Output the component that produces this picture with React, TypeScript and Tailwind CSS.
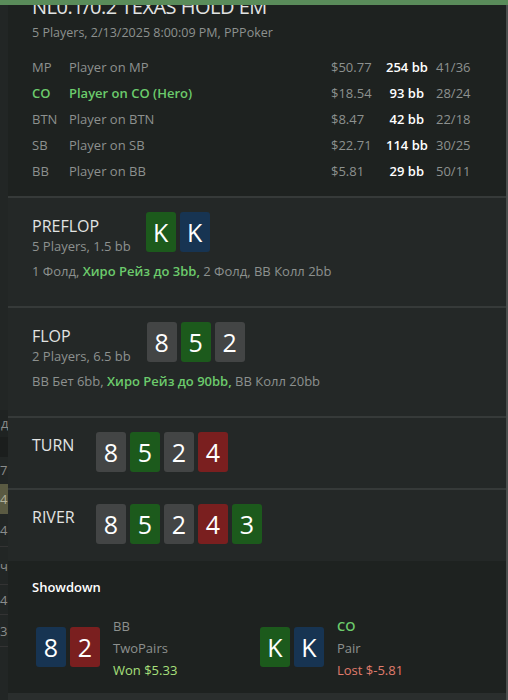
import { X, Minus } from "lucide-react";

type Suit = "g" | "b" | "x" | "r";

const cardBg: Record<Suit, string> = {
  g: "bg-[#1c5a1c]",
  b: "bg-[#173452]",
  x: "bg-[#434545]",
  r: "bg-[#7a1f1f]",
};

function Card({ v, s }: { v: string; s: Suit }) {
  return (
    <div
      className={`${cardBg[s]} w-[30px] h-[40px] rounded-[3px] flex items-center justify-center text-white text-[25px] leading-none`}
    >
      {v}
    </div>
  );
}

const players = [
  { pos: "MP", name: "Player on MP", usd: "$50.77", bb: "254 bb", st: "41/36" },
  { pos: "CO", name: "Player on CO (Hero)", usd: "$18.54", bb: "93 bb", st: "28/24", hero: true },
  { pos: "BTN", name: "Player on BTN", usd: "$8.47", bb: "42 bb", st: "22/18" },
  { pos: "SB", name: "Player on SB", usd: "$22.71", bb: "114 bb", st: "30/25" },
  { pos: "BB", name: "Player on BB", usd: "$5.81", bb: "29 bb", st: "50/11" },
];

export default function App() {
  return (
    <div
      className="relative w-[508px] h-[700px] overflow-hidden bg-[#232726] flex"
      style={{ fontFamily: '"Open Sans", "Noto Sans", sans-serif' }}
    >
      {/* window title bar strip */}
      <div className="absolute top-0 left-0 right-0 h-[5px] bg-[#5a8c5a] z-10" />

      {/* underlying page peeking on the left */}
      <div className="w-[8px] shrink-0 flex flex-col text-[#8a8d8c] text-[13px] overflow-hidden">
        <div className="h-[410px] bg-[#222625]" />
        <div className="h-[27px] bg-[#1f2322] pl-[1px] leading-[27px]">д</div>
        <div className="h-[20px] bg-[#1b1e1d]" />
        <div className="h-[27px] bg-[#222625] leading-[27px]">7</div>
        <div className="h-[30px] bg-[#5a5a42] leading-[30px] text-[#b0b09a]">4</div>
        <div className="h-[33px] bg-[#222625] leading-[33px] border-b border-[#333]">4</div>
        <div className="h-[38px] bg-[#222625] leading-[38px] border-b border-[#333]">ч</div>
        <div className="h-[30px] bg-[#222625] leading-[30px] border-b border-[#333]">4</div>
        <div className="h-[32px] bg-[#222625] leading-[32px] border-b border-[#333]">3</div>
        <div className="flex-1 bg-[#222625]" />
      </div>

      <div className="w-[498px] shrink-0 flex flex-col bg-[#1e2220] text-[13px]">
        {/* header */}
        <div className="px-6 relative">
          <div className="text-[20px] leading-[24px] text-[#e2e4e3] -mt-[5px] tracking-tight">
            NL0.1/0.2 TEXAS HOLD EM
          </div>
          <Minus className="absolute right-[28px] -top-[6px] w-[14px] h-[14px] text-[#aaa]" />
          <X className="absolute right-[6px] -top-[6px] w-[14px] h-[14px] text-[#aaa]" />
          <div className="text-[#8d918f] leading-[18px] mt-[5px] text-[12.5px]">
            5 Players, 2/13/2025 8:00:09 PM, PPPoker
          </div>
          <div className="mt-[13px] mb-[11px] flex flex-col">
            {players.map((p) => (
              <div key={p.pos} className="h-[26px] flex items-center">
                <div
                  className={`w-[37px] ${p.hero ? "text-[#6ccb6c] font-semibold" : "text-[#8d918f]"}`}
                >
                  {p.pos}
                </div>
                <div
                  className={`flex-1 ${p.hero ? "text-[#6ccb6c] font-semibold" : "text-[#8d918f]"}`}
                >
                  {p.name}
                </div>
                <div className="w-[55px] text-[#8d918f]">{p.usd}</div>
                <div className="w-[38px] text-right text-white font-semibold whitespace-nowrap">
                  {p.bb}
                </div>
                <div className="w-[58px] pl-[12px] text-[#8d918f]">{p.st}</div>
              </div>
            ))}
          </div>
        </div>

        {/* preflop */}
        <div className="bg-[#242827] border-t-2 border-[#363a39] px-6 pt-[15px] h-[110px]">
          <div className="flex items-start gap-[15px]">
            <div className="pt-[3px]">
              <div className="text-[16px] leading-[20px] text-[#e2e4e3]">PREFLOP</div>
              <div className="text-[#8d918f] leading-[20px]">5 Players, 1.5 bb</div>
            </div>
            <div className="flex gap-[4px] -mt-[1px]">
              <Card v="K" s="g" />
              <Card v="K" s="b" />
            </div>
          </div>
          <div className="mt-[6px] text-[#8d918f] leading-[18px]">
            1 Фолд, <span className="text-[#6ccb6c] font-semibold">Хиро Рейз до 3bb,</span> 2 Фолд, BB Колл 2bb
          </div>
        </div>

        {/* flop */}
        <div className="bg-[#242827] border-t-2 border-[#363a39] px-6 pt-[15px] h-[110px]">
          <div className="flex items-start gap-[16px]">
            <div className="pt-[3px]">
              <div className="text-[16px] leading-[20px] text-[#e2e4e3]">FLOP</div>
              <div className="text-[#8d918f] leading-[20px]">2 Players, 6.5 bb</div>
            </div>
            <div className="flex gap-[4px] -mt-[1px]">
              <Card v="8" s="x" />
              <Card v="5" s="g" />
              <Card v="2" s="x" />
            </div>
          </div>
          <div className="mt-[6px] text-[#8d918f] leading-[18px]">
            BB Бет 6bb, <span className="text-[#6ccb6c] font-semibold">Хиро Рейз до 90bb,</span> BB Колл 20bb
          </div>
        </div>

        {/* turn */}
        <div className="bg-[#242827] border-t-2 border-[#363a39] px-6 pt-[14px] h-[72px]">
          <div className="flex items-start gap-[24px]">
            <div className="pt-[3px] w-[40px] text-[16px] leading-[20px] text-[#e2e4e3]">TURN</div>
            <div className="flex gap-[4px]">
              <Card v="8" s="x" />
              <Card v="5" s="g" />
              <Card v="2" s="x" />
              <Card v="4" s="r" />
            </div>
          </div>
        </div>

        {/* river */}
        <div className="bg-[#242827] border-t-2 border-[#363a39] px-6 pt-[14px] h-[73px]">
          <div className="flex items-start gap-[24px]">
            <div className="pt-[3px] w-[40px] text-[16px] leading-[20px] text-[#e2e4e3]">RIVER</div>
            <div className="flex gap-[4px]">
              <Card v="8" s="x" />
              <Card v="5" s="g" />
              <Card v="2" s="x" />
              <Card v="4" s="r" />
              <Card v="3" s="g" />
            </div>
          </div>
        </div>

        {/* showdown */}
        <div className="bg-[#1e2220] px-6 pt-[17px] h-[132px]">
          <div className="text-white font-semibold leading-[18px]">Showdown</div>
          <div className="mt-[22px] flex pl-[4px]">
            <div className="w-[224px] flex items-start gap-[13px]">
              <div className="flex gap-[4px] mt-[9px]">
                <Card v="8" s="b" />
                <Card v="2" s="r" />
              </div>
              <div className="flex flex-col leading-[22px] -mt-[3px]">
                <span className="text-[#8d918f]">BB</span>
                <span className="text-[#8d918f]">TwoPairs</span>
                <span className="text-[#a8e07c] font-medium">Won $5.33</span>
              </div>
            </div>
            <div className="flex items-start gap-[13px]">
              <div className="flex gap-[4px] mt-[9px]">
                <Card v="K" s="g" />
                <Card v="K" s="b" />
              </div>
              <div className="flex flex-col leading-[22px] -mt-[3px]">
                <span className="text-[#6ccb6c] font-semibold">CO</span>
                <span className="text-[#8d918f]">Pair</span>
                <span className="text-[#e07c6c]">Lost $-5.81</span>
              </div>
            </div>
          </div>
        </div>
        <div className="flex-1 bg-[#2a2e2d]" />
      </div>
      <div className="w-[2px] shrink-0 bg-[#4a4e4d]" />
    </div>
  );
}
